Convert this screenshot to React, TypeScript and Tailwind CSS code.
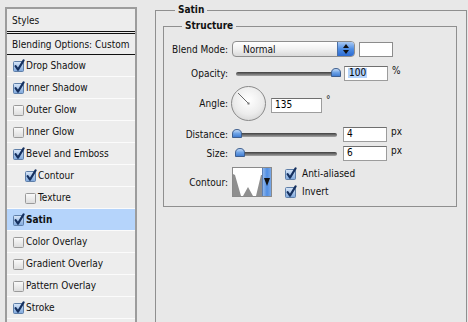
import React from "react";

const FONT = { fontFamily: '"DejaVu Sans Condensed", "DejaVu Sans", "Liberation Sans", sans-serif' };

function CheckBox({ checked }: { checked: boolean }) {
  return (
    <svg width="13" height="13" viewBox="0 0 13 13" className="shrink-0">
      <defs>
        <linearGradient id="cbOn" x1="0" y1="0" x2="0" y2="1">
          <stop offset="0" stopColor="#d9e7f8" />
          <stop offset="1" stopColor="#7ea7dc" />
        </linearGradient>
        <linearGradient id="cbOff" x1="0" y1="0" x2="0" y2="1">
          <stop offset="0" stopColor="#fbfbfb" />
          <stop offset="1" stopColor="#dcdcdc" />
        </linearGradient>
      </defs>
      <rect x="1.5" y="2.5" width="10" height="10" rx="1" fill={checked ? "url(#cbOn)" : "url(#cbOff)"} stroke={checked ? "#5f7fa8" : "#9a9a9a"} />
      {checked && (
        <path d="M3.6 7.2 L6 10.6 L11.6 1.4" stroke="#15305f" strokeWidth="2.1" fill="none" strokeLinecap="round" strokeLinejoin="round" />
      )}
    </svg>
  );
}

function Thumb() {
  return (
    <svg width="10" height="9" viewBox="0 0 10 9">
      <defs>
        <linearGradient id="thumbG" x1="0" y1="0" x2="0" y2="1">
          <stop offset="0" stopColor="#cfe2fa" />
          <stop offset="0.5" stopColor="#6ea3e6" />
          <stop offset="1" stopColor="#3c78cf" />
        </linearGradient>
      </defs>
      <path d="M0.5 8.5 L0.5 5 Q0.5 0.5 5 0.5 Q9.5 0.5 9.5 5 L9.5 8.5 Z" fill="url(#thumbG)" stroke="#3f5f8f" />
    </svg>
  );
}

function Slider({ pos }: { pos: number }) {
  return (
    <div className="relative w-[108px] h-[16px] shrink-0">
      <div className="absolute left-[4px] right-[3px] top-[7px] h-[4px] rounded-full bg-gradient-to-b from-[#3f3f3f] to-[#a8a8a8]" />
      <div className="absolute top-[3px]" style={{ left: pos }}>
        <Thumb />
      </div>
    </div>
  );
}

function Field({ value, selected, w = 44 }: { value: string; selected?: boolean; w?: number }) {
  return (
    <div
      className="h-[15px] bg-white border border-[#9c9c9c] border-t-[#6f6f6f] flex items-center pl-[3px] text-[10px] leading-none text-black shrink-0"
      style={{ width: w }}
    >
      <span className={selected ? "bg-[#b5d4fc] px-[1px]" : ""}>{value}</span>
    </div>
  );
}

const items: { label: string; checked: boolean; indent?: boolean; selected?: boolean }[] = [
  { label: "Drop Shadow", checked: true },
  { label: "Inner Shadow", checked: true },
  { label: "Outer Glow", checked: false },
  { label: "Inner Glow", checked: false },
  { label: "Bevel and Emboss", checked: true },
  { label: "Contour", checked: true, indent: true },
  { label: "Texture", checked: false, indent: true },
  { label: "Satin", checked: true, selected: true },
  { label: "Color Overlay", checked: false },
  { label: "Gradient Overlay", checked: false },
  { label: "Pattern Overlay", checked: false },
  { label: "Stroke", checked: true },
  { label: "", checked: false },
];

export default function App() {
  return (
    <div className="w-[468px] h-[322px] overflow-hidden bg-[#e8e8e8] flex items-start text-[10px] text-[#111]" style={FONT}>
      {/* Left styles list */}
      <div className="ml-[5px] mt-[7px] w-[132px] shrink-0 border-2 border-[#9c9c9c] bg-[#ededed]">
        <div className="h-[22px] flex items-center pl-[5px]">Styles</div>
        <div className="h-[3px] border-y border-[#111]" />
        <div className="h-[21px] flex items-center pl-[5px] border-b border-[#111]">Blending Options: Custom</div>
        {items.map((it, i) =>
          it.label === "" ? (
            <div key={i} className="h-[22px]" />
          ) : (
            <div
              key={i}
              className={
                "h-[22px] flex items-center gap-[1px] border-b border-[#fbfbfb] " +
                (it.indent ? "pl-[17px] " : "pl-[5px] ") +
                (it.selected ? "bg-[#b5d4fb] font-bold" : "")
              }
            >
              <CheckBox checked={it.checked} />
              <span>{it.label}</span>
            </div>
          )
        )}
      </div>

      {/* Right panel */}
      <fieldset className="ml-[18px] mt-[4px] w-[312px] h-[340px] shrink-0 border border-[#8f8f8f] px-[7px]">
        <legend className="ml-[12px] px-[3px] font-bold leading-[12px]">Satin</legend>
        <fieldset className="mt-[4px] w-[294px] border border-[#8f8f8f] pt-[9px] pb-[9px]">
          <legend className="ml-[18px] px-[3px] font-bold leading-[12px]">Structure</legend>

          {/* Blend mode */}
          <div className="flex items-center h-[16px]">
            <div className="w-[64px] text-right">Blend Mode:</div>
            <div className="ml-[4px] w-[123px] h-[16px] rounded-[4px] border border-[#8e8e8e] flex overflow-hidden bg-gradient-to-b from-[#ffffff] via-[#f1f1f1] to-[#dadada]">
              <div className="flex-1 pl-[10px] flex items-center">Normal</div>
              <div className="w-[17px] h-full bg-gradient-to-b from-[#a9c9f3] via-[#4f8ee4] to-[#2c6ad0] border-l border-[#4a6fa5] flex flex-col items-center justify-center gap-[2px]">
                <svg width="6" height="4" viewBox="0 0 6 4"><path d="M0 4 L3 0 L6 4 Z" fill="#111" /></svg>
                <svg width="6" height="4" viewBox="0 0 6 4"><path d="M0 0 L3 4 L6 0 Z" fill="#111" /></svg>
              </div>
            </div>
            <div className="ml-[4px] w-[34px] h-[15px] bg-white border border-[#8c8c8c]" />
          </div>

          {/* Opacity */}
          <div className="flex items-center h-[16px] mt-[8px]">
            <div className="w-[64px] text-right">Opacity:</div>
            <div className="ml-[4px]">
              <Slider pos={99} />
            </div>
            <div className="ml-[4px]">
              <Field value="100" selected />
            </div>
            <div className="ml-[4px] self-start -mt-[2px]">%</div>
          </div>

          {/* Angle */}
          <div className="flex items-center h-[35px] mt-[5px]">
            <div className="w-[64px] text-right">Angle:</div>
            <div className="ml-[3px] w-[35px] h-[35px] rounded-full border border-[#8a8a8a] bg-[radial-gradient(circle_at_50%_40%,#ffffff_0%,#ececec_55%,#c9c9c9_100%)] shrink-0">
              <svg width="33" height="33" viewBox="0 0 33 33">
                <line x1="16.5" y1="16.5" x2="6" y2="6" stroke="#6a6a6a" strokeWidth="1" />
                <rect x="15.5" y="15.5" width="2" height="2" fill="#777" />
              </svg>
            </div>
            <div className="ml-[5px] mt-[3px]">
              <Field value="135" w={51} />
            </div>
            <div className="ml-[4px] self-start mt-[9px] leading-none">°</div>
          </div>

          {/* Distance */}
          <div className="flex items-center h-[16px] mt-[5px]">
            <div className="w-[64px] text-right">Distance:</div>
            <div className="ml-[4px]">
              <Slider pos={0} />
            </div>
            <div className="ml-[3px]">
              <Field value="4" />
            </div>
            <div className="ml-[4px] self-start -mt-[2px]">px</div>
          </div>

          {/* Size */}
          <div className="flex items-center h-[16px] mt-[3px]">
            <div className="w-[64px] text-right">Size:</div>
            <div className="ml-[4px]">
              <Slider pos={3} />
            </div>
            <div className="ml-[3px]">
              <Field value="6" />
            </div>
            <div className="ml-[4px] self-start -mt-[2px]">px</div>
          </div>

          {/* Contour */}
          <div className="flex items-center h-[30px] mt-[6px]">
            <div className="w-[64px] text-right">Contour:</div>
            <div className="ml-[4px] w-[40px] h-[30px] border border-[#8a8a8a] flex shrink-0 bg-white">
              <svg width="29" height="28" viewBox="0 0 29 28" className="shrink-0">
                <path d="M0 28 L0 6 L2 7 L8 28 L10 28 L15 19 L20 28 L23 28 L28 7 L29 7 L29 28 Z" fill="#8f8f8f" />
              </svg>
              <div className="flex-1 bg-gradient-to-r from-[#8fb6ea] via-[#4f8ee4] to-[#7aa8e6] border-l border-[#5a7fb5] flex items-center justify-center">
                <svg width="6" height="8" viewBox="0 0 6 8"><path d="M0 0 L6 0 L3 8 Z" fill="#111" /></svg>
              </div>
            </div>
            <div className="ml-[12px] flex flex-col gap-[5px]">
              <div className="flex items-center gap-[5px] h-[13px]">
                <CheckBox checked />
                <span>Anti-aliased</span>
              </div>
              <div className="flex items-center gap-[5px] h-[13px]">
                <CheckBox checked />
                <span>Invert</span>
              </div>
            </div>
          </div>
        </fieldset>
      </fieldset>
    </div>
  );
}
